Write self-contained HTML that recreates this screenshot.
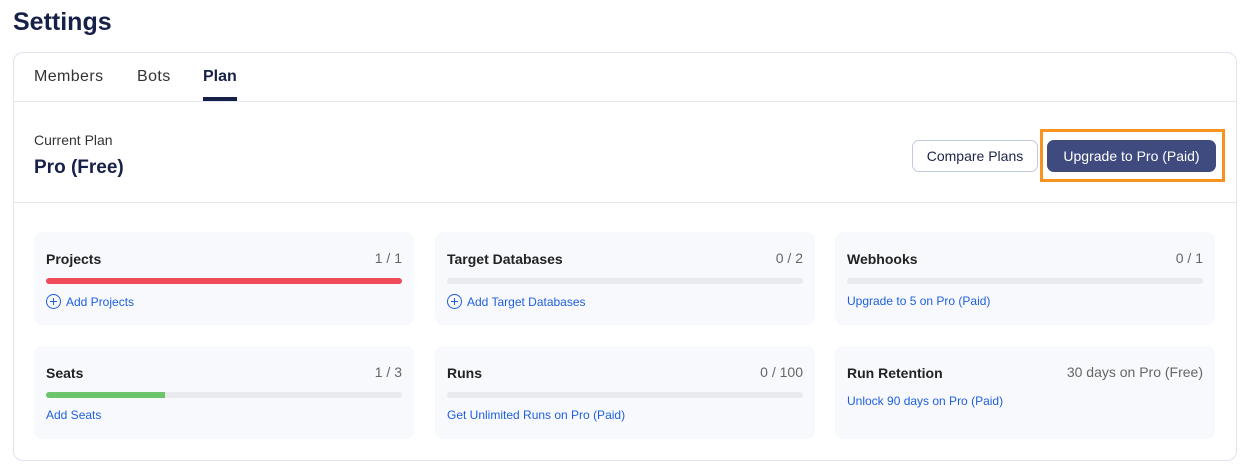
<!DOCTYPE html>
<html><head><style>
*{box-sizing:border-box;margin:0;padding:0}
body{width:1250px;height:476px;background:#fff;font-family:"Liberation Sans",sans-serif;position:relative;overflow:hidden}
.a{position:absolute}
h1{position:absolute;left:13px;top:8px;font-size:25px;font-weight:bold;color:#172048}
.card{left:13px;top:52px;width:1224px;height:409px;border:1px solid #dfe3ee;border-radius:10px}
.tab{top:68px;font-size:16px;color:#333;letter-spacing:0.4px}
.sep{left:14px;width:1222px;height:1px;background:#e3e6ee}
.b{position:absolute;width:380px;height:93px;background:#f7f9fd;border-radius:8px}
.b .t{position:absolute;left:12px;top:19px;font-size:14px;font-weight:bold;color:#222}
.b .n{position:absolute;right:12px;top:18px;font-size:14px;color:#666}
.b .bar{position:absolute;left:12px;right:12px;top:46px;height:6px;border-radius:3px;background:#e8eaee;overflow:hidden}
.b .bar i{display:block;height:100%}
.b .l{position:absolute;left:12px;top:62px;font-size:12px;color:#1f5fdc;display:flex;align-items:center;gap:5px}
.pl{width:15px;height:15px;border:1.5px solid #1f5fdc;border-radius:50%;position:relative}
.pl:before{content:"";position:absolute;left:2.5px;top:5.5px;width:7px;height:1.5px;background:#1f5fdc}
.pl:after{content:"";position:absolute;left:5.5px;top:2.5px;width:1.5px;height:7px;background:#1f5fdc}
</style></head><body>
<h1>Settings</h1>
<div class="a card"></div>
<div class="a tab" style="left:34px">Members</div>
<div class="a tab" style="left:137px">Bots</div>
<div class="a tab" style="left:203px;font-weight:bold;color:#172048;letter-spacing:0">Plan</div>
<div class="a" style="left:203px;top:97px;width:34px;height:4px;background:#172048"></div>
<div class="a sep" style="top:101px"></div>
<div class="a" style="left:34px;top:132px;font-size:14px;color:#333">Current Plan</div>
<div class="a" style="left:34px;top:157px;font-size:19px;font-weight:bold;color:#172048">Pro (Free)</div>
<div class="a" style="left:912px;top:140px;width:126px;height:32px;border:1px solid #c3c9e0;border-radius:7px;font-size:14px;color:#1c2448;text-align:center;line-height:30px">Compare Plans</div>
<div class="a" style="left:1040px;top:129px;width:185px;height:53px;border:3px solid #f7931e"></div>
<div class="a" style="left:1047px;top:140px;width:169px;height:32px;background:#3f4b7e;border-radius:7px;font-size:14px;color:#fff;text-align:center;line-height:32px">Upgrade to Pro (Paid)</div>
<div class="a sep" style="top:202px"></div>

<div class="b" style="left:34px;top:232px"><div class="t">Projects</div><div class="n">1 / 1</div><div class="bar"><i style="width:100%;background:#f04b58"></i></div><div class="l"><span class="pl"></span>Add Projects</div></div>
<div class="b" style="left:435px;top:232px"><div class="t">Target Databases</div><div class="n">0 / 2</div><div class="bar"></div><div class="l"><span class="pl"></span>Add Target Databases</div></div>
<div class="b" style="left:835px;top:232px"><div class="t">Webhooks</div><div class="n">0 / 1</div><div class="bar"></div><div class="l">Upgrade to 5 on Pro (Paid)</div></div>
<div class="b" style="left:34px;top:346px"><div class="t">Seats</div><div class="n">1 / 3</div><div class="bar"><i style="width:33.3%;background:#6cc46c"></i></div><div class="l">Add Seats</div></div>
<div class="b" style="left:435px;top:346px"><div class="t">Runs</div><div class="n">0 / 100</div><div class="bar"></div><div class="l">Get Unlimited Runs on Pro (Paid)</div></div>
<div class="b" style="left:835px;top:346px"><div class="t">Run Retention</div><div class="n">30 days on Pro (Free)</div><div class="l" style="top:48px">Unlock 90 days on Pro (Paid)</div></div>
</body></html>
